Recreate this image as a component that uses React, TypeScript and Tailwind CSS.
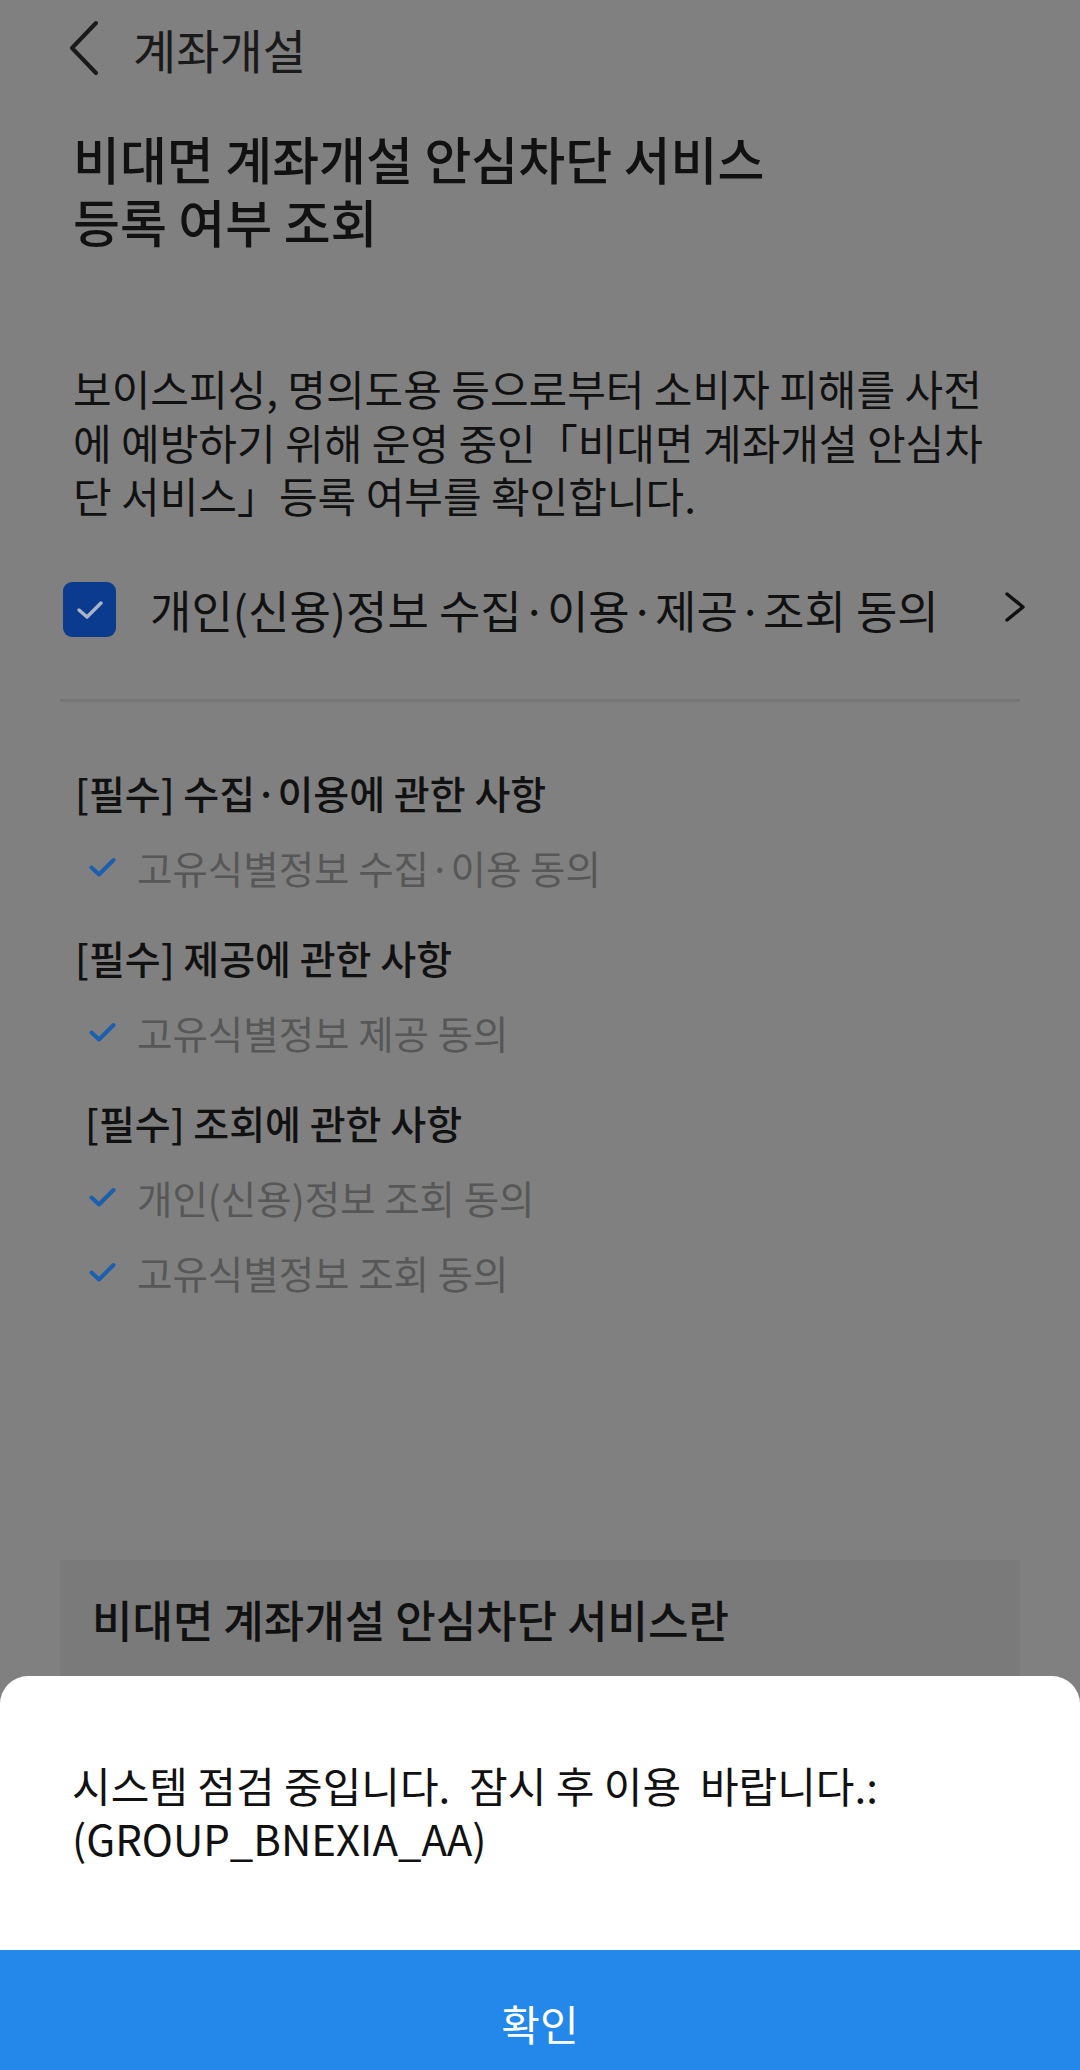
import React from "react";

const SECTIONS = [
  {
    title: "[필수] 수집·이용에 관한 사항",
    indent: false,
    items: ["고유식별정보 수집·이용 동의"],
  },
  {
    title: "[필수] 제공에 관한 사항",
    indent: false,
    items: ["고유식별정보 제공 동의"],
  },
  {
    title: "[필수] 조회에 관한 사항",
    indent: true,
    items: ["개인(신용)정보 조회 동의", "고유식별정보 조회 동의"],
  },
];

const CheckMark = () => (
  <svg width="27" height="21" viewBox="0 0 27 21" fill="none">
    <polyline
      points="2.5,10.5 10,17.5 24.5,3"
      stroke="#1b5fae"
      strokeWidth="4"
      strokeLinecap="round"
      strokeLinejoin="round"
    />
  </svg>
);

const App: React.FC = () => {
  return (
    <div className="relative w-full h-[2070px] overflow-hidden bg-[#808080] font-['Noto_Sans_CJK_KR',sans-serif] text-[#111111]">
      {/* header */}
      <div className="flex items-center h-[96px] pl-[68px]">
        <svg width="32" height="56" viewBox="0 0 32 56" fill="none">
          <polyline
            points="28,3 4,28 28,53"
            stroke="#1a1a1a"
            strokeWidth="4"
            strokeLinecap="round"
            strokeLinejoin="round"
          />
        </svg>
        <span className="ml-[33px] text-[47px] leading-none text-[#1a1a1a]">
          계좌개설
        </span>
      </div>

      <h1 className="mt-[31px] ml-[73px] text-[51px] font-medium leading-[63px] whitespace-nowrap">
        비대면 계좌개설 안심차단 서비스
        <br />
        등록 여부 조회
      </h1>

      <p className="mt-[108px] px-[73px] text-[42px] leading-[53.5px] whitespace-nowrap">
        보이스피싱, 명의도용 등으로부터 소비자 피해를 사전
        <br />
        에 예방하기 위해 운영 중인「비대면 계좌개설 안심차
        <br />
        단 서비스」등록 여부를 확인합니다.
      </p>

      {/* agree all row */}
      <div className="mt-[60px] flex items-center h-[56px] pl-[63px] pr-[53px]">
        <div className="flex items-center justify-center w-[53px] h-[55px] rounded-[9px] bg-[#0b3b8e]">
          <svg width="28" height="20" viewBox="0 0 28 20" fill="none">
            <polyline
              points="3,10 11,17 25,3"
              stroke="#aab4c6"
              strokeWidth="3.5"
              strokeLinecap="round"
              strokeLinejoin="round"
            />
          </svg>
        </div>
        <span className="ml-[34px] text-[45px] leading-none whitespace-nowrap">
          개인(신용)정보 수집·이용·제공·조회 동의
        </span>
        <svg
          className="ml-auto -mt-[6px]"
          width="24"
          height="32"
          viewBox="0 0 24 32"
          fill="none"
        >
          <polyline
            points="4,3 20,16 4,29"
            stroke="#111111"
            strokeWidth="3.5"
            strokeLinecap="round"
            strokeLinejoin="round"
          />
        </svg>
      </div>

      <div className="mt-[61px] mx-[60px] h-[3px] bg-[#767676]" />

      {/* terms */}
      <div className="mt-[66px] flex flex-col">
        {SECTIONS.map((section, i) => (
          <div key={section.title} className={i === 0 ? "" : "mt-[40px]"}>
            <div
              className={`flex items-center h-[50px] text-[39px] font-medium ${
                section.indent ? "pl-[85px]" : "pl-[75px]"
              }`}
            >
              {section.title}
            </div>
            {section.items.map((item) => (
              <div
                key={item}
                className="mt-[25px] flex items-center h-[50px] pl-[89px] text-[38.5px] text-[#575757]"
              >
                <CheckMark />
                <span className="ml-[21px]">{item}</span>
              </div>
            ))}
          </div>
        ))}
      </div>

      {/* info box */}
      <div className="mt-[262px] mx-[60px] h-[320px] bg-[#7a7a7a] pt-[34px] pl-[32px]">
        <div className="text-[44px] font-medium leading-[50px] whitespace-nowrap">
          비대면 계좌개설 안심차단 서비스란
        </div>
      </div>

      {/* bottom sheet */}
      <div className="absolute left-0 right-0 bottom-0 h-[394px] flex flex-col bg-white rounded-t-[28px] overflow-hidden">
        <div className="pt-[82px] pl-[72px] text-[42px] leading-[53px] text-[#111111] whitespace-pre">
          {"시스템 점검 중입니다.  잠시 후 이용  바랍니다.:"}
          <br />
          {"(GROUP_BNEXIA_AA)"}
        </div>
        <button className="mt-auto h-[120px] w-full bg-[#2488ea] text-white text-[42px] leading-[50px] pt-[26px]">
          확인
        </button>
      </div>
    </div>
  );
};

export default App;
